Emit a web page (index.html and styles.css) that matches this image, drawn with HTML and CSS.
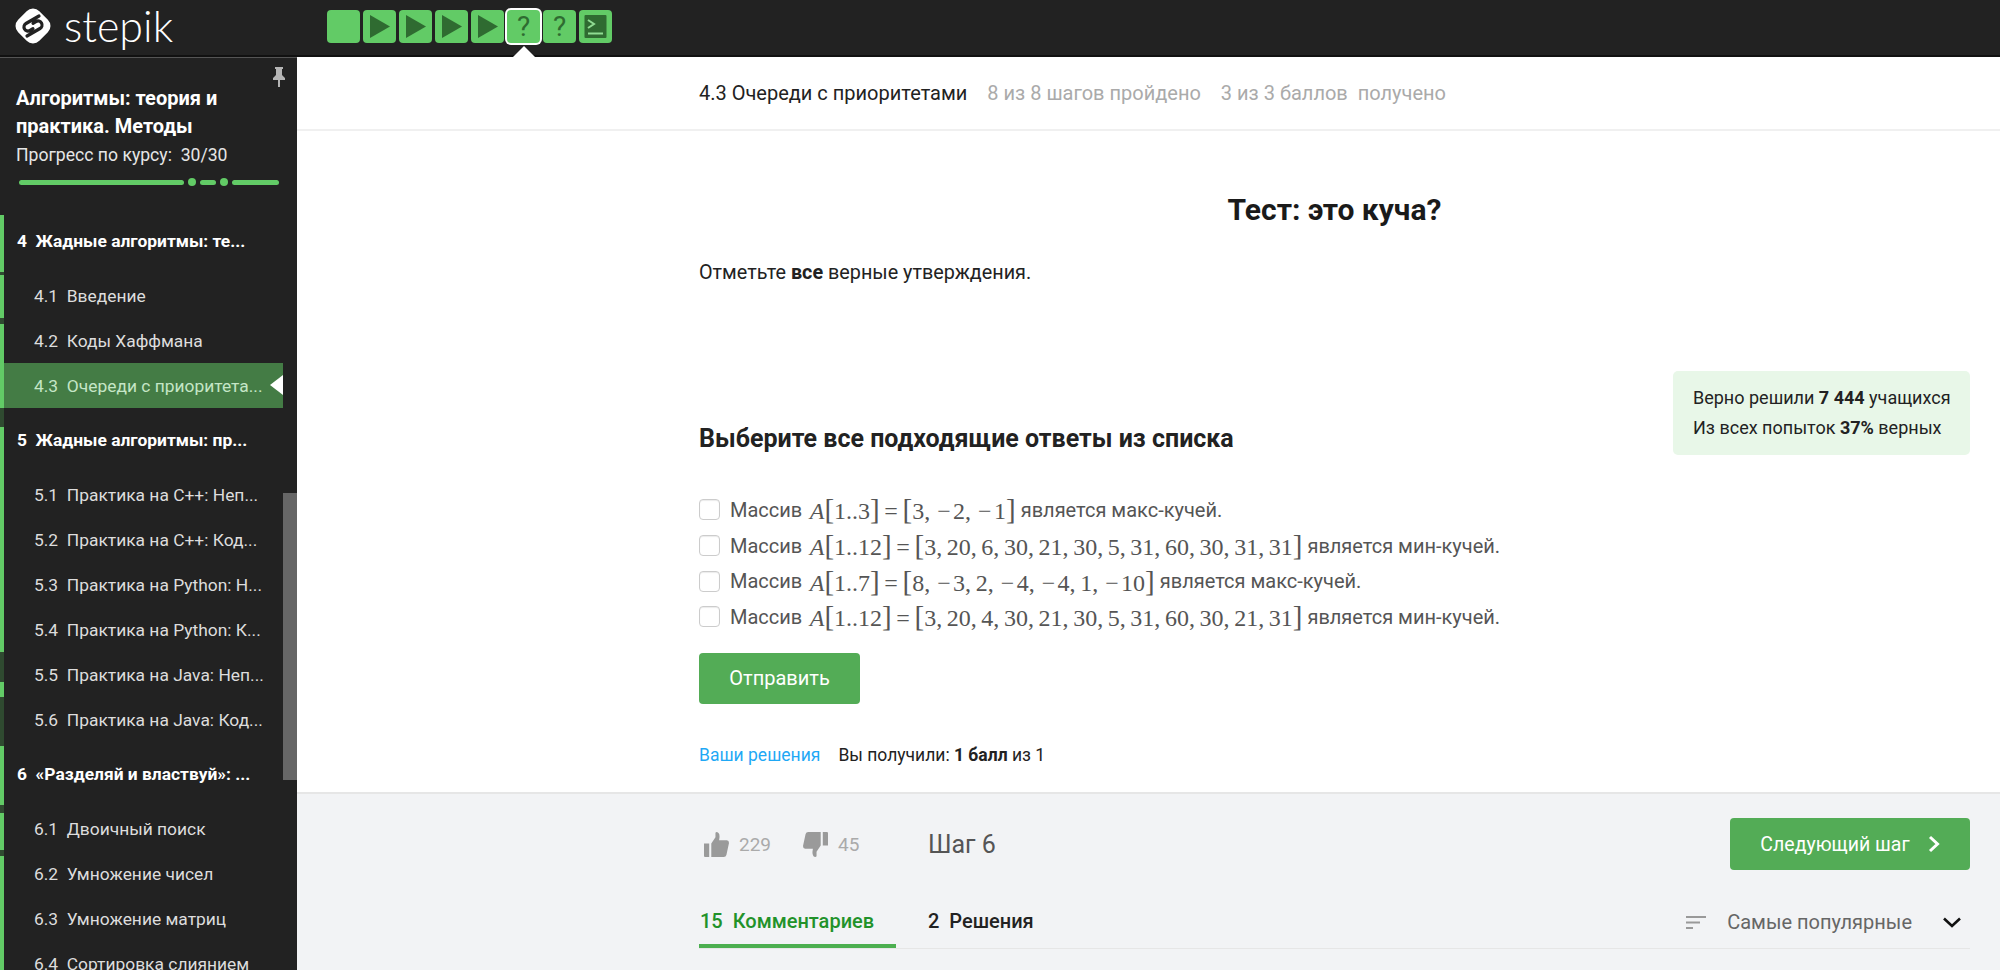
FILE: index.html
```html
<!DOCTYPE html>
<html lang="ru">
<head>
    <meta charset="UTF-8">
    <title>Тест: это куча? - Stepik</title>
    <link rel="stylesheet" href="styles.css">
</head>
<body>
    <header class="topbar">
        <a class="brand">
            <svg class="brand-logo" viewBox="0 0 42 42">
                <rect x="6" y="6" width="30" height="30" rx="9" fill="#fff" transform="rotate(45 21 21)"/>
                <path d="M27 11 L14 18.5 A4 4 0 0 0 18 25.5 L21 23.7 M15 31 L28 23.5 A4 4 0 0 0 24 16.5 L21 18.3" fill="none" stroke="#222" stroke-width="3.2" stroke-linecap="round"/>
            </svg>
            <span class="brand-name">stepik</span>
        </a>
        <nav class="steps">
            <span class="step"></span>
            <span class="step"><svg viewBox="0 0 33 33"><path d="M7 5 L27 16.5 L7 28 Z"/></svg></span>
            <span class="step"><svg viewBox="0 0 33 33"><path d="M7 5 L27 16.5 L7 28 Z"/></svg></span>
            <span class="step"><svg viewBox="0 0 33 33"><path d="M7 5 L27 16.5 L7 28 Z"/></svg></span>
            <span class="step"><svg viewBox="0 0 33 33"><path d="M7 5 L27 16.5 L7 28 Z"/></svg></span>
            <span class="step step-current">?</span>
            <span class="step">?</span>
            <span class="step"><svg viewBox="0 0 33 33"><rect x="5.5" y="5" width="22" height="23" rx="1" fill="#2f6b31"/><path d="M9 10 L15 14 L9 18" fill="none" stroke="#8fdc92" stroke-width="2"/><path d="M9 23.5 H24" stroke="#8fdc92" stroke-width="2"/></svg></span>
        </nav>
    </header>

    <div class="page">
        <aside class="sidebar">
            <svg class="pin" viewBox="0 0 12 20"><path d="M2 0 H10 V2 H9 V8 L12 11 V13 H7 V20 H5 V13 H0 V11 L3 8 V2 H2 Z" fill="#b5b5b5"/></svg>
            <div class="course">
                <div class="course-title">Алгоритмы: теория и практика. Методы</div>
                <div class="course-progress">Прогресс по курсу:&nbsp; 30/30</div>
                <div class="course-bar">
                    <i class="bar-long"></i><b></b><i class="bar-short"></i><b></b><i class="bar-end"></i>
                </div>
            </div>
            <div class="toc">
                <div class="toc-rail"></div>
                <ul class="toc-list">
                    <li class="section">4&nbsp; Жадные алгоритмы: те...</li>
                    <li class="lesson">4.1&nbsp; Введение</li>
                    <li class="lesson">4.2&nbsp; Коды Хаффмана</li>
                    <li class="lesson lesson-active">4.3&nbsp; Очереди с приоритета...</li>
                    <li class="section">5&nbsp; Жадные алгоритмы: пр...</li>
                    <li class="lesson">5.1&nbsp; Практика на C++: Неп...</li>
                    <li class="lesson">5.2&nbsp; Практика на C++: Код...</li>
                    <li class="lesson">5.3&nbsp; Практика на Python: Н...</li>
                    <li class="lesson">5.4&nbsp; Практика на Python: К...</li>
                    <li class="lesson">5.5&nbsp; Практика на Java: Неп...</li>
                    <li class="lesson">5.6&nbsp; Практика на Java: Код...</li>
                    <li class="section">6&nbsp; «Разделяй и властвуй»: ...</li>
                    <li class="lesson">6.1&nbsp; Двоичный поиск</li>
                    <li class="lesson">6.2&nbsp; Умножение чисел</li>
                    <li class="lesson">6.3&nbsp; Умножение матриц</li>
                    <li class="lesson">6.4&nbsp; Сортировка слиянием</li>
                </ul>
            </div>
            <div class="sidebar-scroll"></div>
        </aside>

        <main class="main">
            <div class="lesson-head">
                <span class="lesson-name">4.3 Очереди с приоритетами</span>
                <span class="lesson-stat">8 из 8 шагов пройдено</span>
                <span class="lesson-stat">3 из 3 баллов&nbsp; получено</span>
            </div>

            <section class="step-body">
                <h1 class="step-title">Тест: это куча?</h1>
                <p class="step-text">Отметьте <b>все</b> верные утверждения.</p>

                <div class="quiz-head">
                    <h2 class="quiz-title">Выберите все подходящие ответы из списка</h2>
                    <div class="quiz-stats">
                        <div>Верно решили <b>7 444</b> учащихся</div>
                        <div>Из всех попыток <b>37%</b> верных</div>
                    </div>
                </div>

                <ul class="options">
                    <li class="option"><span class="check"></span>Массив <span class="math"><i>A</i><span class="br">[</span>1..3<span class="br">]</span> = <span class="br">[</span>3, <span class="minus">−</span>2, <span class="minus">−</span>1<span class="br">]</span></span> является макс-кучей.</li>
                    <li class="option"><span class="check"></span>Массив <span class="math"><i>A</i><span class="br">[</span>1..12<span class="br">]</span> = <span class="br">[</span>3, 20, 6, 30, 21, 30, 5, 31, 60, 30, 31, 31<span class="br">]</span></span> является мин-кучей.</li>
                    <li class="option"><span class="check"></span>Массив <span class="math"><i>A</i><span class="br">[</span>1..7<span class="br">]</span> = <span class="br">[</span>8, <span class="minus">−</span>3, 2, <span class="minus">−</span>4, <span class="minus">−</span>4, 1, <span class="minus">−</span>10<span class="br">]</span></span> является макс-кучей.</li>
                    <li class="option"><span class="check"></span>Массив <span class="math"><i>A</i><span class="br">[</span>1..12<span class="br">]</span> = <span class="br">[</span>3, 20, 4, 30, 21, 30, 5, 31, 60, 30, 21, 31<span class="br">]</span></span> является мин-кучей.</li>
                </ul>

                <button class="btn btn-submit">Отправить</button>

                <div class="attempts">
                    <a class="attempts-link">Ваши решения</a>
                    <span>Вы получили: <b>1 балл</b> из 1</span>
                </div>
            </section>

            <footer class="step-foot">
                <div class="foot-row">
                    <div class="votes">
                        <svg class="thumb" viewBox="0 0 24 24"><path d="M0 11 H5 V24 H1 Q0 24 0 23 Z M7 11 L11 5 V1 Q11 0 12.5 0 Q16 1 14.5 8 H22 Q24 8 24 10.5 L21.5 22 Q21 24 19 24 H7 Z" fill="#9a9a9a"/></svg>
                        <span class="vote-count">229</span>
                        <svg class="thumb thumb-down" viewBox="0 0 24 24"><path d="M24 13 H19 V0 H23 Q24 0 24 1 Z M17 13 L13 19 V23 Q13 24 11.5 24 Q8 23 9.5 16 H2 Q0 16 0 13.5 L2.5 2 Q3 0 5 0 H17 Z" fill="#9a9a9a"/></svg>
                        <span class="vote-count">45</span>
                    </div>
                    <div class="step-number">Шаг 6</div>
                    <button class="btn btn-next">Следующий шаг
                        <svg viewBox="0 0 12 18"><path d="M2 2 L9.5 9 L2 16" fill="none" stroke="#fff" stroke-width="3"/></svg>
                    </button>
                </div>
                <div class="tabs">
                    <a class="tab tab-active">15&nbsp; Комментариев</a>
                    <a class="tab">2&nbsp; Решения</a>
                    <div class="sort">
                        <svg class="sort-icon" viewBox="0 0 20 13"><path d="M0 1 H20 M0 6.5 H14 M0 12 H7" stroke="#999" stroke-width="2"/></svg>
                        <span>Самые популярные</span>
                        <svg class="sort-arrow" viewBox="0 0 20 11"><path d="M2 1.5 L10 9 L18 1.5" fill="none" stroke="#111" stroke-width="2.6"/></svg>
                    </div>
                </div>
            </footer>
        </main>
    </div>
</body>
</html>
```

FILE: styles.css
```css
html, body {
    height: 100%;
    margin: 0;
}

body {
    font-family: Roboto, "Noto Sans", sans-serif;
    font-size: 16px;
    color: #222;
    background: #fff;
    overflow: hidden;
    display: flex;
    flex-direction: column;
}

/* top bar */
.topbar {
    height: 57px;
    flex: none;
    box-sizing: border-box;
    background: #222;
    display: flex;
    align-items: flex-start;
    border-bottom: 2px solid #111;
}

.brand {
    width: 327px;
    display: flex;
    align-items: center;
    padding: 5px 0 0 12px;
    box-sizing: border-box;
}

.brand-logo {
    width: 42px;
    height: 42px;
}

.brand-name {
    font-family: Lato, sans-serif;
    font-weight: 300;
    font-size: 43px;
    line-height: 38px;
    color: #fff;
    margin-left: 10px;
}

.steps {
    display: flex;
    gap: 3px;
    padding-top: 10px;
}

.step {
    width: 33px;
    height: 33px;
    box-sizing: border-box;
    border-radius: 4px;
    background: #62cb66;
    color: #2f6b31;
    font-size: 28px;
    font-weight: 400;
    text-align: center;
    line-height: 33px;
    position: relative;
}

.step svg {
    display: block;
    width: 33px;
    height: 33px;
    fill: #2f6b31;
}

.step-current {
    box-shadow: 0 0 0 2px #fff;
}

.step-current::after {
    content: "";
    position: absolute;
    left: 50%;
    top: 36px;
    margin-left: -11px;
    border: 11px solid transparent;
    border-top: 0;
    border-bottom-color: #fff;
}

/* sidebar */
.page {
    flex: 1;
    display: flex;
    min-height: 0;
}

.sidebar {
    width: 297px;
    flex: none;
    position: relative;
    background: #222;
    border-top: 1px solid #555;
    box-sizing: border-box;
    color: #fff;
    overflow: hidden;
    display: flex;
    flex-direction: column;
}

.pin {
    position: absolute;
    top: 9px;
    left: 273px;
    width: 12px;
    height: 20px;
}

.course {
    height: 150px;
    flex: none;
    box-sizing: border-box;
    padding: 26px 16px 0;
}

.course-title {
    font-weight: 700;
    font-size: 20px;
    line-height: 28px;
    width: 240px;
}

.course-progress {
    font-size: 17.6px;
    line-height: 24px;
    margin-top: 3px;
    color: #e6e6e6;
}

.course-bar {
    display: flex;
    align-items: center;
    gap: 4px;
    margin: 11px 0 0 3px;
    width: 261px;
}

.course-bar i {
    height: 5px;
    border-radius: 3px;
    background: #62cb66;
}

.course-bar b {
    width: 8px;
    height: 8px;
    border-radius: 50%;
    background: #62cb66;
}

.bar-long { width: 165px; }
.bar-short { width: 16px; }
.bar-end { width: 47px; }

.toc {
    flex: 1;
    display: flex;
    min-height: 0;
}

.toc-rail {
    width: 4px;
    flex: none;
    background: linear-gradient(to bottom,
        transparent 0 7px,
        #62cb66 7px 64px, #2f4a30 64px 67px,
        #62cb66 67px 110px, #2f4a30 110px 116px,
        #62cb66 116px 200px, #2f4a30 200px 219px,
        #62cb66 219px 444px, #2f4a30 444px 474px,
        #62cb66 474px 489px, #2f4a30 489px 538px,
        #62cb66 538px 597px, #2f4a30 597px 605px,
        #62cb66 605px 642px, #2f4a30 642px 648px,
        #62cb66 648px);
}

.toc-list {
    list-style: none;
    margin: 0;
    padding: 1px 0 0;
    flex: 1;
    min-width: 0;
}

.section {
    height: 64px;
    box-sizing: border-box;
    padding: 20px 0 0 13px;
    font-size: 17.4px;
    line-height: 24px;
    font-weight: 700;
    white-space: nowrap;
}

.lesson {
    height: 45px;
    line-height: 46px;
    padding-left: 30px;
    width: 279px;
    box-sizing: border-box;
    font-size: 17.4px;
    color: #ddd;
    white-space: nowrap;
    position: relative;
}

.lesson-active {
    background: #447c45;
    color: #c5e6c6;
}

.lesson-active::after {
    content: "";
    position: absolute;
    right: 0;
    top: 12px;
    border: 10px solid transparent;
    border-left: 0;
    border-right: 13px solid #fff;
}

.sidebar-scroll {
    position: absolute;
    left: 283px;
    top: 435px;
    width: 14px;
    height: 287px;
    background: #666;
}

/* main column */
.main {
    flex: 1;
    min-width: 0;
    display: flex;
    flex-direction: column;
}

.lesson-head {
    height: 74px;
    flex: none;
    box-sizing: border-box;
    border-bottom: 2px solid #f0f0f0;
    padding-left: 402px;
    display: flex;
    align-items: center;
    gap: 20px;
    font-size: 20px;
}

.lesson-stat {
    color: #aaa;
}

.step-body {
    flex: 1;
    padding: 0 30px 0 402px;
}

.step-title {
    margin: 59px 0 0;
    text-align: center;
    font-size: 30px;
    line-height: 40px;
    font-weight: 700;
    color: #1a1a1a;
}

.step-text {
    margin: 30px 0 0;
    font-size: 19.8px;
    line-height: 26px;
}

.quiz-head {
    display: flex;
    justify-content: space-between;
    align-items: flex-end;
    margin-top: 85px;
}

.quiz-title {
    margin: 0;
    font-size: 25px;
    line-height: 32px;
    font-weight: 700;
}

.quiz-stats {
    width: 297px;
    height: 84px;
    box-sizing: border-box;
    padding: 12px 0 12px 20px;
    background: #e8f7e8;
    border-radius: 5px;
    font-size: 18px;
    line-height: 30px;
    white-space: nowrap;
}

.options {
    list-style: none;
    margin: 37px 0 0;
    padding: 0;
    color: #555;
    font-size: 20px;
}

.option {
    height: 35.7px;
    display: flex;
    align-items: center;
    white-space: pre;
}

.check {
    width: 21px;
    height: 21px;
    box-sizing: border-box;
    border: 1px solid #ccc;
    border-radius: 4px;
    background: #fff;
    margin-right: 10px;
    box-shadow: inset 0 1px 1px rgba(0, 0, 0, .08);
}

.math {
    font-family: "Liberation Serif", serif;
    font-size: 24px;
    word-spacing: -1.4px;
    margin-left: 2.5px;
}

.math .br {
    font-size: 29px;
    font-weight: 100;
}

.math .minus {
    margin: 0 2.4px;
}

.btn {
    border: 0;
    border-radius: 4px;
    background: #53ac56;
    color: #fff;
    font-family: inherit;
    font-size: 20px;
    padding: 0;
}

.btn-submit {
    display: block;
    width: 161px;
    height: 51px;
    margin-top: 18px;
}

.attempts {
    margin-top: 39px;
    font-size: 17.5px;
    line-height: 24px;
    display: flex;
    gap: 18px;
}

.attempts-link {
    color: #1fa8f5;
}

/* footer of the step */
.step-foot {
    flex: none;
    height: 178px;
    box-sizing: border-box;
    background: #f2f3f5;
    border-top: 2px solid #e6e6e6;
    padding: 0 30px 0 402px;
}

.foot-row {
    display: flex;
    align-items: center;
    height: 52px;
    margin-top: 24px;
}

.votes {
    display: flex;
    align-items: center;
    width: 229px;
    padding-left: 5px;
    box-sizing: border-box;
}

.thumb {
    width: 25px;
    height: 25px;
}

.thumb-down {
    margin-left: 32px;
}

.vote-count {
    margin-left: 10px;
    font-size: 19px;
    color: #aaa;
}

.step-number {
    font-size: 25px;
    color: #555;
}

.btn-next {
    margin-left: auto;
    width: 240px;
    height: 52px;
    font-size: 19.5px;
    display: flex;
    align-items: center;
    justify-content: center;
    gap: 18px;
}

.btn-next svg {
    width: 12px;
    height: 18px;
}

.tabs {
    display: flex;
    align-items: center;
    height: 53px;
    margin-top: 25px;
    font-size: 20px;
    font-weight: 500;
    border-bottom: 1px solid #e6e6e6;
}

.tab {
    height: 53px;
    box-sizing: border-box;
    line-height: 52px;
    margin-right: 32px;
}

.tab-active {
    color: #22922a;
    width: 197px;
    padding-left: 1px;
    border-bottom: 4px solid #4caf50;
}

.sort {
    margin-left: auto;
    padding-top: 1px;
    display: flex;
    align-items: center;
    font-weight: 400;
    color: #666;
    font-size: 20px;
}

.sort-icon {
    width: 20px;
    height: 13px;
    margin-right: 21px;
}

.sort-arrow {
    width: 20px;
    height: 11px;
    margin: 0 8px 0 30px;
}
```
